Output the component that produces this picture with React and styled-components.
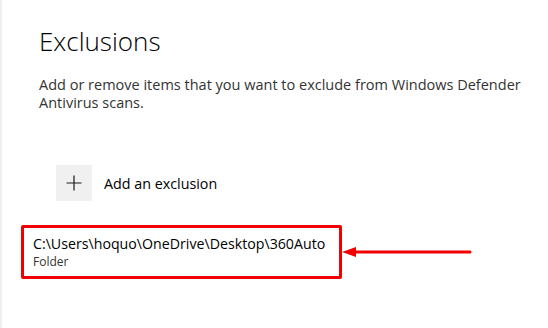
import React from 'react';
import styled, { createGlobalStyle } from 'styled-components';

const GlobalStyle = createGlobalStyle`
    html, body {
        margin: 0;
        padding: 0;
        background: #fff;
        font-family: "Open Sans", "Noto Sans", sans-serif;
    }
`;

const Page = styled.div`
    min-height: 100vh;
    box-sizing: border-box;
    border-left: 2px solid #f0f0f0;
    padding-top: 25px;
`;

const Header = styled.header`
    padding-left: 37px;
`;

const Title = styled.h1`
    margin: 0;
    font-size: 26px;
    line-height: 32px;
    font-weight: 300;
    color: #000;
`;

const Description = styled.p`
    margin: 19px 0 0;
    max-width: 495px;
    font-size: 14.5px;
    line-height: 18px;
    color: #333;
`;

const AddButton = styled.button`
    display: flex;
    align-items: center;
    gap: 12px;
    margin: 53px 0 0 54px;
    padding: 0;
    border: none;
    background: none;
    font-family: inherit;
    font-size: 14.3px;
    color: #000;
    cursor: pointer;
`;

const PlusTile = styled.span`
    display: flex;
    align-items: center;
    justify-content: center;
    width: 36px;
    height: 36px;
    background: #f0f0f0;
`;

const ItemRow = styled.div`
    display: flex;
    align-items: center;
    margin: 24px 0 0 19px;
`;

const Item = styled.div`
    display: flex;
    flex-direction: column;
    width: 321px;
    height: 54px;
    box-sizing: border-box;
    padding: 6px 9px 0;
    border: 3px solid ${p => p.$mark ? '#f20000' : 'transparent'};
    border-radius: 2px;
`;

const ItemPath = styled.span`
    font-size: 14.2px;
    line-height: 20px;
    color: #000;
    white-space: nowrap;
`;

const ItemType = styled.span`
    font-size: 12px;
    line-height: 16px;
    color: #333;
`;

const Plus = () => (
    <svg width="16" height="16" viewBox="0 0 16 16">
        <path d="M8 0.5v15M0.5 8h15" stroke="#1a1a1a" strokeWidth="1.2" fill="none" />
    </svg>
);

// flecha roja de anotación
const Arrow = () => (
    <svg width="130" height="14" viewBox="0 0 130 14">
        <path d="M12 7H128" stroke="#f20000" strokeWidth="3" strokeLinecap="round" />
        <path d="M0 7L14 2V12Z" fill="#f20000" />
    </svg>
);

const App = () => {
    const exclusions = [
        { path: 'C:\\Users\\hoquo\\OneDrive\\Desktop\\360Auto', type: 'Folder' },
    ];

    return (
        <>
            <GlobalStyle />
            <Page>
                <Header>
                    <Title>Exclusions</Title>
                    <Description>
                        Add or remove items that you want to exclude from Windows Defender Antivirus scans.
                    </Description>
                </Header>
                <AddButton>
                    <PlusTile><Plus /></PlusTile>
                    Add an exclusion
                </AddButton>
                {exclusions.map(item => (
                    <ItemRow key={item.path}>
                        <Item $mark>
                            <ItemPath>{item.path}</ItemPath>
                            <ItemType>{item.type}</ItemType>
                        </Item>
                        <Arrow />
                    </ItemRow>
                ))}
            </Page>
        </>
    );
};

export default App;
